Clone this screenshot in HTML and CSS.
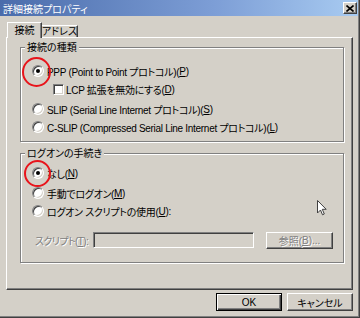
FILE: index.html
```html
<!DOCTYPE html>
<html lang="ja">

<head>
    <meta charset="UTF-8">
    <title>詳細接続プロパティ</title>
    <link rel="stylesheet" href="styles.css">
</head>

<body>
    <div class="window">
        <div class="frame">
            <div class="titlebar">
                <span class="title">詳細接続プロパティ</span>
                <span class="close-btn">
                    <svg width="8" height="7" viewBox="0 0 8 7">
                        <path d="M0.5 0.5 L7.5 6.5 M7.5 0.5 L0.5 6.5" stroke="#000" stroke-width="1.6" fill="none"/>
                    </svg>
                </span>
            </div>

            <div class="content">
                <div class="tabs">
                    <div class="tab active">接続</div>
                    <div class="tab">アドレス</div>
                </div>

                <div class="panel">
                    <!-- 接続の種類 -->
                    <fieldset class="group group-type">
                        <legend>接続の種類</legend>
                        <div class="opt"><span class="radio checked"></span>PPP (Point to Point プロトコル)(<u>P</u>)</div>
                        <div class="opt sub"><span class="check"></span>LCP 拡張を無効にする(<u>D</u>)</div>
                        <div class="opt spaced"><span class="radio"></span>SLIP (Serial Line Internet プロトコル)(<u>S</u>)</div>
                        <div class="opt"><span class="radio"></span>C-SLIP (Compressed Serial Line Internet プロトコル)(<u>L</u>)</div>
                    </fieldset>

                    <!-- ログオンの手続き -->
                    <fieldset class="group group-logon">
                        <legend>ログオンの手続き</legend>
                        <div class="opt"><span class="radio checked"></span>なし(<u>N</u>)</div>
                        <div class="opt spaced"><span class="radio"></span>手動でログオン(<u>M</u>)</div>
                        <div class="opt"><span class="radio"></span>ログオン スクリプトの使用(<u>U</u>):</div>
                        <div class="script-row">
                            <span class="script-label disabled">スクリプト(<u>T</u>):</span>
                            <span class="script-input"></span>
                            <span class="btn browse-btn disabled">参照(<u>B</u>)...</span>
                        </div>
                    </fieldset>
                </div>

                <div class="actions">
                    <button class="btn default">OK</button>
                    <button class="btn">キャンセル</button>
                </div>
            </div>
        </div>

        <div class="mark mark-ppp"></div>
        <div class="mark mark-none"></div>

        <svg class="cursor" width="10" height="16" viewBox="0 0 10 16">
            <path d="M0.5 0.5 V13 L3.5 10 L5.5 14.8 L7.3 14 L5.3 9.3 H9.2 Z" fill="#fff" stroke="#404040" stroke-width="1"/>
        </svg>
    </div>
</body>

</html>
```

FILE: styles.css
```css
body {
    margin: 0;
    padding: 0;
    background-color: #d4d0c8;
    color: #000;
    font-family: 'Liberation Sans', 'Noto Sans CJK JP', sans-serif;
    font-size: 10px;
    font-feature-settings: "palt";
}

.window {
    position: relative;
    width: 360px;
    height: 318px;
    box-sizing: border-box;
    border-right: 1px solid #404040;
    border-bottom: 1px solid #404040;
    overflow: hidden;
}

.frame {
    height: 100%;
    box-sizing: border-box;
    border-right: 1px solid #808080;
    border-bottom: 1px solid #808080;
}

.titlebar {
    height: 16px;
    display: flex;
    align-items: center;
    justify-content: space-between;
    padding: 0 1px 0 3px;
    background: linear-gradient(to right, #4a6cab, #7d9ed6 60%, #a8cbf1);
    color: #fff;
    font-size: 10px;
}

.close-btn {
    width: 14px;
    height: 12px;
    box-sizing: border-box;
    display: flex;
    align-items: center;
    justify-content: center;
    background-color: #d4d0c8;
    border: 1px solid;
    border-color: #fff #404040 #404040 #fff;
    box-shadow: inset -1px -1px #808080;
}

.content {
    padding: 0 5px 0 6px;
}

.tabs {
    display: flex;
    align-items: flex-end;
    height: 15px;
    margin-top: 6px;
}

.tab {
    height: 12px;
    width: 36px;
    box-sizing: border-box;
    display: flex;
    align-items: center;
    justify-content: center;
    white-space: nowrap;
    border-top: 1px solid #fff;
    border-right: 1px solid #404040;
    box-shadow: inset -1px 0 #808080;
    line-height: 11px;
}

.tab.active {
    position: relative;
    z-index: 1;
    height: 16px;
    width: 35px;
    margin-left: 1px;
    margin-bottom: -1px;
    border-left: 1px solid #fff;
    background-color: #d4d0c8;
}

.panel {
    height: 253px;
    box-sizing: border-box;
    padding: 3px 8px 0 13px;
    border-top: 1px solid #fff;
    border-left: 1px solid #fff;
    border-right: 1px solid #404040;
    border-bottom: 1px solid #404040;
    box-shadow: inset -1px -1px #808080;
}

.group {
    margin: 0;
    padding: 0;
    min-width: 0;
    border: 1px solid #808080;
    box-shadow: inset 1px 1px #fff, 1px 1px #fff;
}

.group legend {
    margin-left: 4px;
    padding: 0 2px;
    line-height: 13px;
    background-color: #d4d0c8;
}

.group-type {
    padding-top: 8px;
    padding-bottom: 5px;
}

.group-logon {
    margin-top: 5px;
    padding-top: 4px;
    padding-bottom: 13px;
}

.opt {
    display: flex;
    align-items: center;
    height: 18px;
    padding-left: 11px;
    white-space: nowrap;
    letter-spacing: -0.3px;
}

.opt.sub {
    padding-left: 32px;
}

.opt.spaced {
    margin-top: 2px;
}

.radio {
    position: relative;
    flex: none;
    width: 12px;
    height: 12px;
    box-sizing: border-box;
    margin-right: 3px;
    border-radius: 50%;
    background-color: #fff;
    border: 1px solid;
    border-color: #808080 #fff #fff #808080;
    box-shadow: inset 1px 1px #404040, inset -1px -1px #d4d0c8;
}

.radio.checked::after {
    content: "";
    position: absolute;
    left: 3px;
    top: 3px;
    width: 4px;
    height: 4px;
    border-radius: 50%;
    background-color: #000;
}

.check {
    flex: none;
    width: 11px;
    height: 11px;
    box-sizing: border-box;
    margin-right: 2px;
    background-color: #fff;
    border: 1px solid;
    border-color: #808080 #fff #fff #808080;
    box-shadow: inset 1px 1px #404040, inset -1px -1px #d4d0c8;
}

.script-row {
    display: flex;
    align-items: center;
    height: 18px;
    margin-top: 11px;
    padding-left: 14px;
}

.script-label {
    width: 58px;
    white-space: nowrap;
    letter-spacing: -0.6px;
}

.disabled {
    color: #808080;
    text-shadow: 1px 1px 0 #fff;
}

.script-input {
    flex: none;
    width: 161px;
    height: 16px;
    box-sizing: border-box;
    border: 1px solid;
    border-color: #808080 #fff #fff #808080;
    box-shadow: inset 1px 1px #404040, inset -1px -1px #d4d0c8;
}

.btn {
    width: 66px;
    height: 18px;
    box-sizing: border-box;
    padding: 0;
    display: flex;
    align-items: center;
    justify-content: center;
    font: inherit;
    color: #000;
    background-color: #d4d0c8;
    border: 1px solid;
    border-color: #fff #404040 #404040 #fff;
    box-shadow: inset -1px -1px #808080;
}

.btn.browse-btn {
    flex: none;
    width: 67px;
    height: 17px;
    margin-left: 12px;
    color: #808080;
}

.btn.default {
    border: 1px solid #000;
    box-shadow: inset 1px 1px #fff, inset -1px -1px #404040, inset -2px -2px #808080;
}

.actions {
    display: flex;
    justify-content: flex-end;
    gap: 5px;
    margin-top: 3px;
}

/* marcas rojas */
.mark {
    position: absolute;
    box-sizing: border-box;
    border: 2px solid #e8141b;
    border-radius: 50%;
}

.mark-ppp {
    left: 22px;
    top: 57px;
    width: 29px;
    height: 30px;
}

.mark-none {
    left: 24px;
    top: 160px;
    width: 27px;
    height: 27px;
}

.cursor {
    position: absolute;
    left: 317px;
    top: 200px;
}
```
